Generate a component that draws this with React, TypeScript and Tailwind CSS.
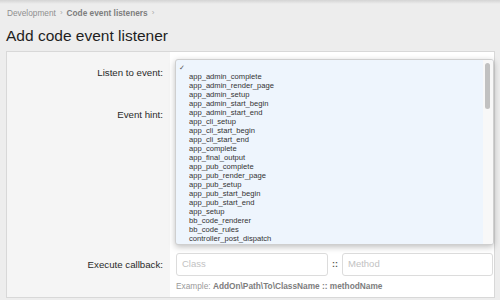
import React from 'react'

const events = [
  'app_admin_complete',
  'app_admin_render_page',
  'app_admin_setup',
  'app_admin_start_begin',
  'app_admin_start_end',
  'app_cli_setup',
  'app_cli_start_begin',
  'app_cli_start_end',
  'app_complete',
  'app_final_output',
  'app_pub_complete',
  'app_pub_render_page',
  'app_pub_setup',
  'app_pub_start_begin',
  'app_pub_start_end',
  'app_setup',
  'bb_code_renderer',
  'bb_code_rules',
  'controller_post_dispatch',
]

export default function App() {
  return (
    <div
      className="relative w-[500px] h-[300px] overflow-hidden bg-[#ededed] text-[#222]"
      style={{ fontFamily: '"Liberation Sans", Arial, sans-serif' }}
    >
      {/* top shade */}
      <div className="h-[4px] bg-gradient-to-b from-[#d4d4d4] to-[#ededed]" />

      {/* breadcrumb */}
      <div className="flex items-center gap-[4px] px-[7px] pt-[4px] text-[8.3px] leading-[10px] text-[#8f8f8f]">
        <span>Development</span>
        <span className="text-[8px] text-[#aaa]">›</span>
        <span className="font-bold text-[#7d7d7d]">Code event listeners</span>
        <span className="text-[8px] text-[#aaa]">›</span>
      </div>

      <h1 className="px-[6px] pt-[9px] text-[15.5px] leading-[18px] text-[#1e1e1e]">Add code event listener</h1>

      {/* form block */}
      <div className="absolute left-[6px] right-[5px] top-[51px] bottom-[2px] border border-[#d8d8d8] bg-white">
        <div className="flex h-[42px]">
          <div className="w-[163px] shrink-0 bg-[#f5f5f5] pr-[7px] pt-[15px] text-right text-[9.7px] leading-[12px] text-[#2a2a2a]">
            Listen to event:
          </div>
          <div className="flex-1 pl-[6px] pr-[2px] pt-[9px]">
            <div className="h-[22px] rounded-[3px] border border-[#d8d8d8] bg-white" />
          </div>
        </div>
        <div className="flex h-[150px]">
          <div className="w-[163px] shrink-0 bg-[#f5f5f5] pr-[7px] pt-[15px] text-right text-[9.7px] leading-[12px] text-[#2a2a2a]">
            Event hint:
          </div>
          <div className="flex-1 pl-[6px] pr-[2px] pt-[9px]">
            <div className="h-[22px] rounded-[3px] border border-[#d8d8d8] bg-white" />
          </div>
        </div>
        <div className="flex h-[53px]">
          <div className="w-[163px] shrink-0 bg-[#f5f5f5] pr-[7px] pt-[15px] text-right text-[9.7px] leading-[12px] text-[#2a2a2a]">
            Execute callback:
          </div>
          <div className="flex-1 pl-[6px] pr-[1px] pt-[9px]">
            <div className="flex items-center">
              <div className="flex h-[23px] w-[152px] items-center rounded-[3px] border border-[#dcdcdc] bg-white px-[5px] text-[9.5px] text-[#c2c2c2]">
                Class
              </div>
              <span className="w-[14px] text-center text-[9px] font-bold text-[#555]">::</span>
              <div className="flex h-[23px] flex-1 items-center rounded-[3px] border border-[#dcdcdc] bg-white px-[5px] text-[9.5px] text-[#c2c2c2]">
                Method
              </div>
            </div>
            <div className="pt-[5px] text-[8.3px] leading-[10px] text-[#9a9a9a]">
              Example: <span className="font-bold text-[#7d7d7d]">AddOn\Path\To\ClassName :: methodName</span>
            </div>
          </div>
        </div>
      </div>

      {/* open select list */}
      <div className="absolute left-[175px] top-[59px] flex h-[186px] w-[319px] overflow-hidden rounded-[3px] border border-[#cfcfcf] bg-[#eef5fd] shadow-[0_2px_6px_rgba(0,0,0,0.25)]">
        <div className="flex-1 pt-[3px] text-[7.6px] leading-[9px] text-[#333]">
          <div className="h-[9px] pl-[3px] text-[7px] text-[#555]">✓</div>
          {events.map(e => (
            <div key={e} className="h-[9px] pl-[13px]">{e}</div>
          ))}
        </div>
        <div className="w-[10px] shrink-0 bg-[#f8f8f8] pl-[2px] pt-[3px]">
          <div className="h-[46px] w-[5px] rounded-full bg-[#c1c1c1]" />
        </div>
      </div>
    </div>
  )
}
